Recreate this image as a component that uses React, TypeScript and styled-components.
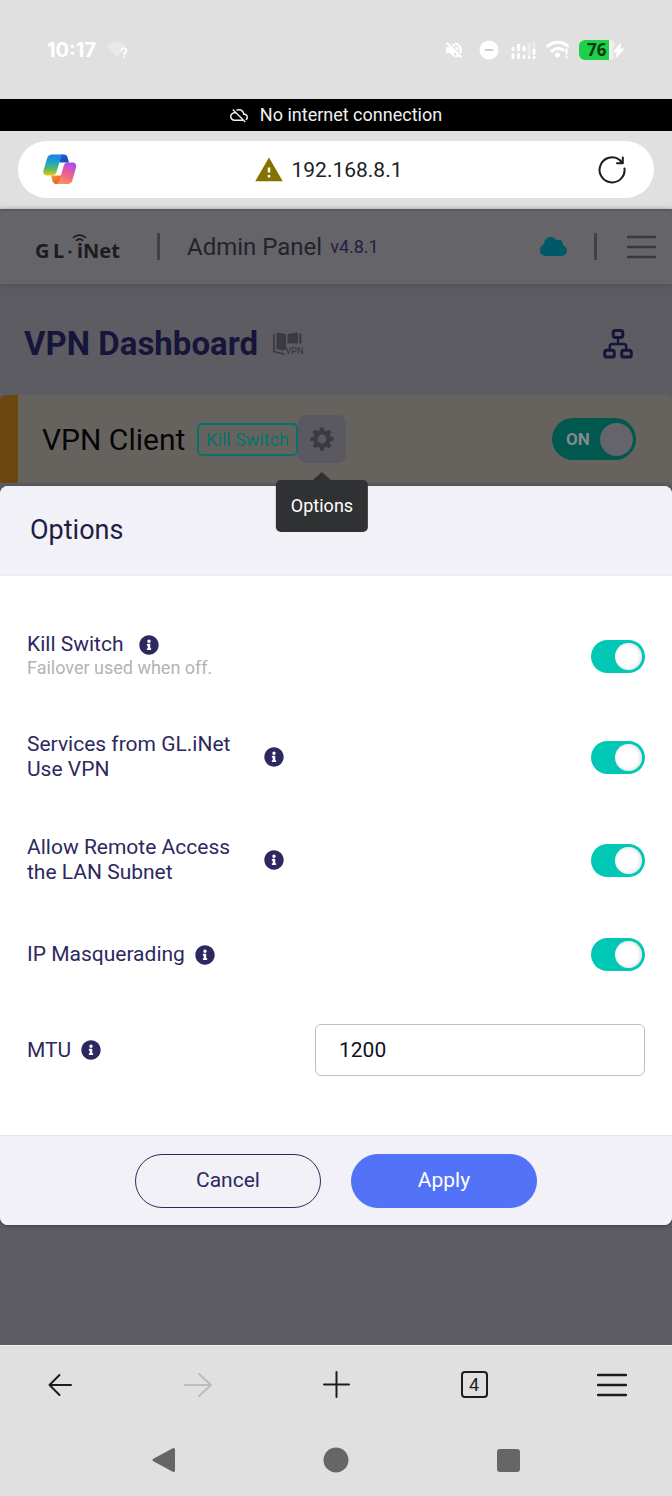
import React from 'react';
import styled, { createGlobalStyle } from 'styled-components';
import { FaCloud, FaInfoCircle } from 'react-icons/fa';

const GlobalStyle = createGlobalStyle`
  *, *::before, *::after { box-sizing: border-box; }
  body {
    margin: 0;
    background: #e0e0e0;
    font-family: Roboto, "Liberation Sans", sans-serif;
  }
  h1, h2, p { margin: 0; font-weight: 400; }
  button, input { font: inherit; margin: 0; }
  svg { display: block; flex: none; }
`;

const Screen = styled.div`
  display: flex;
  flex-direction: column;
  min-height: 100vh;
`;

const StatusBar = styled.header`
  display: flex;
  align-items: center;
  justify-content: space-between;
  height: 99px;
  padding: 0 46px 0 47px;
  color: #fff;
`;

const StatusGroup = styled.div`
  display: flex;
  align-items: center;
  gap: 10px;
`;

const Clock = styled.time`
  font: 700 20px/24px Inter, Roboto, sans-serif;
`;

const Battery = styled.span`
  display: flex;
  align-items: center;
`;

const BatteryLevel = styled.span`
  width: 30px;
  height: 20px;
  padding-left: 8px;
  border-radius: 6px 0 0 6px;
  background: #1fd04a;
  color: #083a10;
  font: 700 17px/20px "Noto Sans", sans-serif;
`;

const OfflineBanner = styled.div`
  display: flex;
  align-items: center;
  justify-content: center;
  gap: 12px;
  height: 32px;
  background: #000;
  color: #f1f1f1;
  font-size: 18px;
  line-height: 32px;
`;

const AddressArea = styled.div`
  padding: 10px 18px 11px;
`;

const AddressBar = styled.div`
  display: flex;
  align-items: center;
  justify-content: space-between;
  height: 57px;
  padding: 0 24px;
  border-radius: 29px;
  background: #fff;
`;

const Address = styled.div`
  display: flex;
  align-items: center;
  gap: 7px;
  padding-right: 15px;
  color: #202124;
  font-size: 21px;
`;

const IconButton = styled.button<{ $size?: number; $muted?: boolean }>`
  display: flex;
  align-items: center;
  justify-content: center;
  flex: none;
  width: ${(p) => p.$size ?? 48}px;
  height: ${(p) => p.$size ?? 48}px;
  padding: 0;
  border: 0;
  background: transparent;
  color: ${(p) => (p.$muted ? '#bcbcbc' : '#1c1c1e')};
`;

const Viewport = styled.main`
  flex: 1;
  background: #5d5c62;
`;

const PanelHeader = styled.div`
  display: flex;
  align-items: center;
  height: 75px;
  padding: 0 16px 2px 35px;
  border-top: 2px solid #5b5a5e;
  background: #656469;
  box-shadow: 0 2px 6px #525157;
`;

const Divider = styled.span<{ $before: number; $after: number }>`
  width: 3px;
  height: 27px;
  margin: 0 ${(p) => p.$after}px 0 ${(p) => p.$before}px;
  background: #414045;
`;

const PanelName = styled.span`
  color: #232328;
  font-size: 24px;
`;

const Version = styled.span`
  margin: 0 auto 0 8px;
  color: #211f47;
  font-size: 18px;
`;

const TitleRow = styled.div`
  display: flex;
  align-items: center;
  gap: 15px;
  height: 111px;
  padding: 8px 30px 0 24px;
`;

const PageTitle = styled.h1`
  color: #17153a;
  font-size: 33px;
  font-weight: 700;
`;

const TitleAction = styled(IconButton)`
  margin-left: auto;
`;

const ClientCard = styled.section`
  display: flex;
  align-items: center;
  height: 88px;
  margin-bottom: 3px;
  padding: 0 36px 0 24px;
  border-left: 18px solid #6a4611;
  border-radius: 6px 6px 0 0;
  background: #66635f;
`;

const ClientTitle = styled.h2`
  margin-right: 12px;
  color: #050505;
  font-size: 30px;
`;

const Tag = styled.span`
  padding: 0 7px;
  border: 2px solid #06736a;
  border-radius: 5px;
  color: #06736a;
  font-size: 18px;
  line-height: 29px;
`;

const TooltipAnchor = styled.div`
  position: relative;
  margin-right: auto;
`;

const GearButton = styled(IconButton)`
  border-radius: 8px;
  background: #5a5961;
  color: #3b3a42;
`;

const Tooltip = styled.div`
  position: absolute;
  z-index: 2;
  top: 65px;
  left: 50%;
  transform: translateX(-50%);
  padding: 14px 15px;
  border-radius: 5px;
  background: #303133;
  color: #fff;
  font-size: 18px;
  line-height: 24px;

  &::before {
    content: '';
    position: absolute;
    top: -8px;
    left: 50%;
    margin-left: -9px;
    border: 9px solid transparent;
    border-top-width: 0;
    border-bottom: 8px solid #303133;
  }
`;

const PowerSwitch = styled.label`
  display: flex;
  align-items: center;
  justify-content: space-between;
  width: 84px;
  height: 42px;
  padding: 0 3px 0 14px;
  border-radius: 21px;
  background: #00584e;
  color: #88888d;
  font-size: 17px;
  font-weight: 700;

  input {
    appearance: none;
    width: 33px;
    height: 33px;
    border-radius: 50%;
    background: #65646a;
  }
`;

const Dialog = styled.section`
  position: relative;
  z-index: 1;
  margin-bottom: 120px;
  border-radius: 8px;
  overflow: hidden;
  background: #fff;
  box-shadow: 0 1px 4px #3f3e44;
`;

const DialogHeader = styled.div`
  height: 90px;
  padding: 0 30px;
  border-bottom: 2px solid #eeedf2;
  background: #f2f1f7;
`;

const DialogTitle = styled.h2`
  color: #201d45;
  font-size: 27px;
  line-height: 88px;
`;

const DialogBody = styled.div`
  display: flex;
  flex-direction: column;
  gap: 53px;
  padding: 57px 27px 59px;
`;

const OptionRow = styled.div`
  display: flex;
  align-items: center;
  justify-content: space-between;
`;

const LabelLine = styled.div<{ $gap?: number }>`
  display: flex;
  align-items: center;
  gap: ${(p) => p.$gap ?? 10}px;
  color: #2d2960;
`;

const OptionLabel = styled.label<{ $single?: boolean }>`
  max-width: 227px;
  font-size: 21px;
  line-height: ${(p) => (p.$single ? 23 : 25)}px;
`;

const Hint = styled.p`
  color: #b3b3b5;
  font-size: 18px;
  line-height: 23px;
`;

const InfoButton = styled(IconButton)`
  color: #2d2960;
`;

const Switch = styled.input`
  appearance: none;
  flex: none;
  width: 54px;
  height: 33px;
  padding: 3px;
  border-radius: 17px;
  background: #c9c9cf;

  &::before {
    content: '';
    display: block;
    width: 27px;
    height: 27px;
    border-radius: 50%;
    background: #fff;
    box-shadow: inset -1px 0 4px #d9d4d8;
  }

  &:checked {
    background: #00c8b4;
  }

  &:checked::before {
    margin-left: auto;
  }
`;

const TextField = styled.input`
  width: 330px;
  height: 52px;
  padding: 0 23px;
  border: 1px solid #bfbfc2;
  border-radius: 6px;
  background: #fff;
  color: #111118;
  font-size: 21px;
`;

const DialogFooter = styled.div`
  display: flex;
  justify-content: center;
  gap: 30px;
  padding: 18px 24px 17px;
  border-top: 1px solid #e4e3e9;
  background: #f2f1f7;
`;

const ActionButton = styled.button<{ $primary?: boolean }>`
  width: 186px;
  height: 54px;
  padding: 0 0 2px;
  border: 1px solid ${(p) => (p.$primary ? '#5272f7' : '#2d2960')};
  border-radius: 27px;
  background: ${(p) => (p.$primary ? '#5272f7' : 'transparent')};
  color: ${(p) => (p.$primary ? '#fff' : '#2d2960')};
  font-size: 21px;
`;

const BrowserBar = styled.nav`
  display: flex;
  align-items: center;
  justify-content: space-between;
  height: 79px;
  padding: 0 36px 1px;
  border-top: 1px solid #f2f2f2;
`;

const TabCount = styled.span`
  width: 27px;
  height: 27px;
  border: 2px solid #1c1c1e;
  border-radius: 4px;
  font-size: 18px;
  line-height: 24px;
  text-align: center;
`;

const SystemBar = styled.nav`
  display: flex;
  justify-content: center;
  gap: 124px;
  height: 72px;
  padding-top: 12px;
`;

const MutedIcon = () => (
  <svg width="24" height="20" viewBox="0 0 24 24" fill="#fff" aria-hidden="true">
    <path d="M16.5 12c0-1.77-1.02-3.29-2.5-4.03v2.21l2.45 2.45c.03-.2.05-.41.05-.63zm2.5 0c0 .94-.2 1.82-.54 2.64l1.51 1.51C20.63 14.91 21 13.5 21 12c0-4.28-2.99-7.86-7-8.77v2.06c2.89.86 5 3.54 5 6.71zM4.27 3 3 4.27 7.73 9H3v6h4l5 5v-6.73l4.25 4.25c-.67.52-1.42.93-2.25 1.18v2.06c1.38-.31 2.63-.95 3.69-1.81L19.73 21 21 19.73l-9-9L4.27 3zM12 4 9.91 6.09 12 8.18V4z" stroke="#fff" strokeWidth="1" />
  </svg>
);

const DndIcon = () => (
  <svg width="24" height="20" viewBox="0 0 24 20" aria-hidden="true">
    <circle cx="13" cy="10" r="9.5" fill="#fff" />
    <path d="M9.500 10h7" stroke="#cfcfcf" strokeWidth="1.800" strokeLinecap="round" />
  </svg>
);

const SignalIcon = () => (
  <svg width="26" height="20" viewBox="0 0 26 20" fill="none" strokeWidth="3" strokeLinecap="round" aria-hidden="true">
    <path d="M3 8.500v1M8.500 5v5M3 14.500v3M8.500 14.500v3M14 16.500v1M14 7v3" stroke="#fff" />
    <path d="M19 4v11M24 2.500v5" stroke="#ececec" />
    <path d="M24 10v3.500M24 17.500v.1M19 17.500v.1" stroke="#fff" />
  </svg>
);

const WifiIcon = () => (
  <svg width="23" height="20" viewBox="0 0 23 20" fill="none" stroke="#fff" strokeWidth="3" strokeLinecap="round" aria-hidden="true">
    <path d="M2 6c5.500-5 14-5 19.500 0M6 11c3-3 8-3.300 11-1" />
    <circle cx="11.500" cy="15" r="1" fill="#fff" />
    <path d="M20.500 9.500v4M20.500 17v.1" strokeWidth="2.400" />
  </svg>
);

const UnknownWifiIcon = () => (
  <svg width="22" height="18" viewBox="0 0 22 18" fill="none" aria-hidden="true">
    <path d="M1 5C7 .5 14 .5 20 5l-9 10.500z" fill="#e9e9e9" stroke="#e9e9e9" strokeLinejoin="round" />
    <path d="M15.500 9.500c0-3 5-2.800 5 0 0 2-2.300 2-2.300 4M18.200 16v.1" stroke="#fff" strokeWidth="1.800" strokeLinecap="round" />
  </svg>
);

const BoltIcon = () => (
  <svg width="17" height="20" viewBox="0 0 17 20" aria-hidden="true">
    <path d="M0 0c4 0 6 2 6 5l-3 6 2 7c-1 1.500-3 2-5 2z" fill="#efefef" />
    <path d="M11.500 3.500 4.500 12h4l-1.500 5.500 8-8.500h-4.200z" fill="#fff" stroke="#fff" strokeLinejoin="round" />
  </svg>
);

const CloudOffIcon = () => (
  <svg width="18" height="18" viewBox="0 0 24 24" fill="#f1f1f1" aria-hidden="true">
    <path d="M19.35 10.04C18.67 6.59 15.64 4 12 4c-1.48 0-2.85.43-4.01 1.17l1.46 1.46C10.21 6.23 11.08 6 12 6c3.04 0 5.5 2.46 5.5 5.5v.5H19c1.66 0 3 1.34 3 3 0 1.13-.64 2.11-1.56 2.62l1.45 1.45C23.16 18.16 24 16.68 24 15c0-2.64-2.05-4.78-4.65-4.96zM3 5.27l2.75 2.74C2.56 8.15 0 10.77 0 14c0 3.31 2.69 6 6 6h11.73l2 2L21 20.73 4.27 4 3 5.27zM7.73 10l8 8H6c-2.21 0-4-1.79-4-4s1.79-4 4-4h1.73z" />
  </svg>
);

const CopilotIcon = () => (
  <svg width="34" height="31" viewBox="0 0 34 31" aria-hidden="true">
    <defs>
      <linearGradient id="cpTop" x1="0" y1="0" x2="0" y2="1">
        <stop offset="0" stopColor="#1c7fe6" />
        <stop offset=".4" stopColor="#1fa5c4" />
        <stop offset=".7" stopColor="#5fbb5a" />
        <stop offset="1" stopColor="#e8c81e" />
      </linearGradient>
      <linearGradient id="cpBottom" x1=".7" y1="0" x2=".3" y2="1">
        <stop offset="0" stopColor="#a44ff0" />
        <stop offset=".5" stopColor="#ee5d92" />
        <stop offset="1" stopColor="#fb9659" />
      </linearGradient>
      <linearGradient id="cpFold" x1="0" y1="0" x2="1" y2="1">
        <stop offset="0" stopColor="#1a63d8" />
        <stop offset="1" stopColor="#1c3fb4" />
      </linearGradient>
      <linearGradient id="cpTail" x1="0" y1="0" x2="1" y2="1">
        <stop offset="0" stopColor="#f0a030" />
        <stop offset="1" stopColor="#e8463c" />
      </linearGradient>
    </defs>
    <path d="M18 .5h3c2 0 3 1.200 3.600 3.200L26 8.600H16z" fill="url(#cpFold)" />
    <path d="M16 30h-3c-2 0-3-1.200-3.600-3.200L8 21.400h11z" fill="url(#cpTail)" />
    <path d="M9.500.5h11c-1.600.4-2.400 2-3 4l-4 13.500c-.7 2.300-2 3.500-4.500 3.500H4c-3.300 0-4.300-2.500-3.400-5.500L4 4.500C4.900 1.800 6.500.5 9.500.5z" fill="url(#cpTop)" />
    <path d="M24.500 30h-11c1.600-.4 2.400-2 3-4l4.200-14c.6-2.100 1.500-3.500 3.800-3.500h5c3.300 0 4.300 2.500 3.400 5.500L29.500 26c-.9 2.700-2 4-5 4z" fill="url(#cpBottom)" />
  </svg>
);

const WarningIcon = () => (
  <svg width="30" height="30" viewBox="0 0 24 24" fill="#827200" aria-label="Not secure">
    <path d="M1 21h22L12 2 1 21zm12-3h-2v-2h2v2zm0-4h-2v-4h2v4z" />
  </svg>
);

const ReloadIcon = () => (
  <svg width="30" height="30" viewBox="0 0 30 30" fill="none" stroke="#1c1c1e" strokeWidth="2" strokeLinecap="round" strokeLinejoin="round">
    <path d="M27.500 13.500A12.500 12.500 0 1 1 22.700 5L25.500 8M25.800 2.500V8.300H20" />
  </svg>
);

const Logo = () => (
  <svg width="92" height="40" viewBox="0 0 92 40" fill="#1c1b20" aria-label="GL.iNet" fontFamily='"Noto Sans", sans-serif' fontWeight="700" fontSize="20">
    <text x="0" y="31">G</text>
    <text x="18" y="31">L</text>
    <circle cx="35" cy="25" r="1.600" />
    <text x="42" y="31">iNet</text>
    <g fill="none" stroke="#1c1b20" strokeWidth="1.700" strokeLinecap="round">
      <path d="M38.500 10.500c3.300-3.300 8.700-3.300 12 0M41.500 13.300c1.800-1.400 4.400-1.400 6.200 0" />
    </g>
  </svg>
);

const GuideIcon = () => (
  <svg width="32" height="26" viewBox="0 0 32 26" fill="#3b3a40" aria-label="VPN guide">
    <path d="M0 3h1.800v17l9.700 2.300V24L0 21.300z" />
    <path d="M3.500 1.500 13 3v15.500l-3 1-6.500-1.500z" />
    <path d="M14.500 3 25 1.500v11H14.500z" />
    <path d="M26.200 2.500H28.500v10h-2.300z" />
    <text x="12.500" y="23" fontSize="9" fontWeight="500" fontFamily="Roboto, sans-serif">VPN</text>
  </svg>
);

const SitemapIcon = () => (
  <svg width="30" height="30" viewBox="0 0 30 30" fill="none" stroke="#17153a" strokeWidth="3">
    <rect x="10.200" y="1.500" width="9.600" height="7" rx="2.200" />
    <rect x="1.700" y="21.300" width="9.600" height="6.800" rx="2.200" />
    <rect x="18.700" y="21.300" width="9.600" height="6.800" rx="2.200" />
    <path d="M15 8.500v6.500M6.800 21v-3.500c0-1.700.8-2.500 2.500-2.500h11.400c1.700 0 2.500.8 2.500 2.500V21" strokeWidth="2.400" />
  </svg>
);

const GearIcon = () => (
  <svg width="24" height="24" viewBox="0 0 24 24" fill="none" stroke="currentColor" aria-hidden="true">
    <circle cx="12" cy="12" r="6.700" strokeWidth="4.600" />
    <g strokeWidth="4.200" strokeLinecap="butt">
      {[0, 45, 90, 135].map((angle) => (
        <path key={angle} d="M12 .5v4M12 19.500v4" transform={`rotate(${angle} 12 12)`} />
      ))}
    </g>
  </svg>
);

const LinesIcon = ({ color, width, gap }: { color: string; width: number; gap: number }) => (
  <svg width={width} height="30" viewBox={`0 0 ${width} 30`} stroke={color} strokeWidth="2.300" strokeLinecap="round">
    <path d={`M1 ${15 - gap}H${width - 1}M1 15H${width - 1}M1 ${15 + gap}H${width - 1}`} />
  </svg>
);

const strokeProps = { fill: 'none', stroke: 'currentColor', strokeWidth: 2, strokeLinecap: 'round', strokeLinejoin: 'round' } as const;

type Option = { id: string; label: string; hint?: string };

const options: Option[] = [
  { id: 'kill-switch', label: 'Kill Switch', hint: 'Failover used when off.' },
  { id: 'services-vpn', label: 'Services from GL.iNet Use VPN' },
  { id: 'remote-lan', label: 'Allow Remote Access the LAN Subnet' },
  { id: 'masquerading', label: 'IP Masquerading' },
];

const Info = ({ about }: { about: string }) => (
  <InfoButton type="button" $size={20} aria-label={`About ${about}`}>
    <FaInfoCircle size={20} />
  </InfoButton>
);

export default function App() {
  return (
    <Screen>
      <GlobalStyle />
      <StatusBar>
        <StatusGroup>
          <Clock>10:17</Clock>
          <UnknownWifiIcon />
        </StatusGroup>
        <StatusGroup>
          <MutedIcon />
          <DndIcon />
          <SignalIcon />
          <WifiIcon />
          <Battery>
            <BatteryLevel>76</BatteryLevel>
            <BoltIcon />
          </Battery>
        </StatusGroup>
      </StatusBar>

      <OfflineBanner role="status">
        <CloudOffIcon />
        No internet connection
      </OfflineBanner>

      <AddressArea>
        <AddressBar>
          <IconButton type="button" $size={36} aria-label="Copilot"><CopilotIcon /></IconButton>
          <Address><WarningIcon />192.168.8.1</Address>
          <IconButton type="button" $size={36} aria-label="Reload"><ReloadIcon /></IconButton>
        </AddressBar>
      </AddressArea>

      <Viewport>
        <PanelHeader>
          <Logo />
          <Divider $before={30} $after={27} />
          <PanelName>Admin Panel</PanelName>
          <Version>v4.8.1</Version>
          <FaCloud size={27} color="#005966" />
          <Divider $before={27} $after={30} />
          <IconButton type="button" $size={29} aria-label="Menu"><LinesIcon color="#3a393e" width={29} gap={10} /></IconButton>
        </PanelHeader>

        <TitleRow>
          <PageTitle>VPN Dashboard</PageTitle>
          <GuideIcon />
          <TitleAction type="button" aria-label="Network map"><SitemapIcon /></TitleAction>
        </TitleRow>

        <ClientCard>
          <ClientTitle>VPN Client</ClientTitle>
          <Tag>Kill Switch</Tag>
          <TooltipAnchor>
            <GearButton type="button" aria-describedby="options-tip" aria-label="Options"><GearIcon /></GearButton>
            <Tooltip id="options-tip" role="tooltip">Options</Tooltip>
          </TooltipAnchor>
          <PowerSwitch>
            ON
            <input type="checkbox" defaultChecked />
          </PowerSwitch>
        </ClientCard>

        <Dialog role="dialog" aria-labelledby="dialog-title">
          <DialogHeader>
            <DialogTitle id="dialog-title">Options</DialogTitle>
          </DialogHeader>
          <DialogBody>
            {options.map(({ id, label, hint }) => (
              <OptionRow key={id}>
                <div>
                  <LabelLine $gap={hint ? 15 : 10}>
                    <OptionLabel htmlFor={id} $single={Boolean(hint)}>{label}</OptionLabel>
                    <Info about={label} />
                  </LabelLine>
                  {hint && <Hint>{hint}</Hint>}
                </div>
                <Switch id={id} type="checkbox" defaultChecked />
              </OptionRow>
            ))}
            <OptionRow>
              <LabelLine>
                <OptionLabel htmlFor="mtu">MTU</OptionLabel>
                <Info about="MTU" />
              </LabelLine>
              <TextField id="mtu" type="text" inputMode="numeric" defaultValue="1200" />
            </OptionRow>
          </DialogBody>
          <DialogFooter>
            <ActionButton type="button">Cancel</ActionButton>
            <ActionButton type="button" $primary>Apply</ActionButton>
          </DialogFooter>
        </Dialog>
      </Viewport>

      <BrowserBar aria-label="Browser">
        <IconButton type="button" aria-label="Back">
          <svg width="24" height="24" viewBox="0 0 24 24" {...strokeProps}><path d="M23 12H1.500M11.500 2 1.500 12l10 10" /></svg>
        </IconButton>
        <IconButton type="button" aria-label="Forward" $muted disabled>
          <svg width="28" height="26" viewBox="0 0 28 26" {...strokeProps}><path d="M1 13h26M15 2l12 11-12 11" /></svg>
        </IconButton>
        <IconButton type="button" aria-label="New tab">
          <svg width="27" height="27" viewBox="0 0 27 27" {...strokeProps}><path d="M1 13.500h25M13.500 1v25" /></svg>
        </IconButton>
        <IconButton type="button" aria-label="Open tabs"><TabCount>4</TabCount></IconButton>
        <IconButton type="button" aria-label="Browser menu"><LinesIcon color="#1c1c1e" width={30} gap={10} /></IconButton>
      </BrowserBar>

      <SystemBar aria-label="System">
        <IconButton type="button" aria-label="System back">
          <svg width="26" height="26" viewBox="0 0 26 26" fill="#666" stroke="#666" strokeWidth="3" strokeLinejoin="round"><path d="M22.500 2.500v21L3 13z" /></svg>
        </IconButton>
        <IconButton type="button" aria-label="Home">
          <svg width="26" height="26" viewBox="0 0 26 26" fill="#666"><circle cx="13" cy="13" r="12.500" /></svg>
        </IconButton>
        <IconButton type="button" aria-label="Recent apps">
          <svg width="23" height="23" viewBox="0 0 23 23" fill="#666"><rect width="23" height="23" rx="3" /></svg>
        </IconButton>
      </SystemBar>
    </Screen>
  );
}
